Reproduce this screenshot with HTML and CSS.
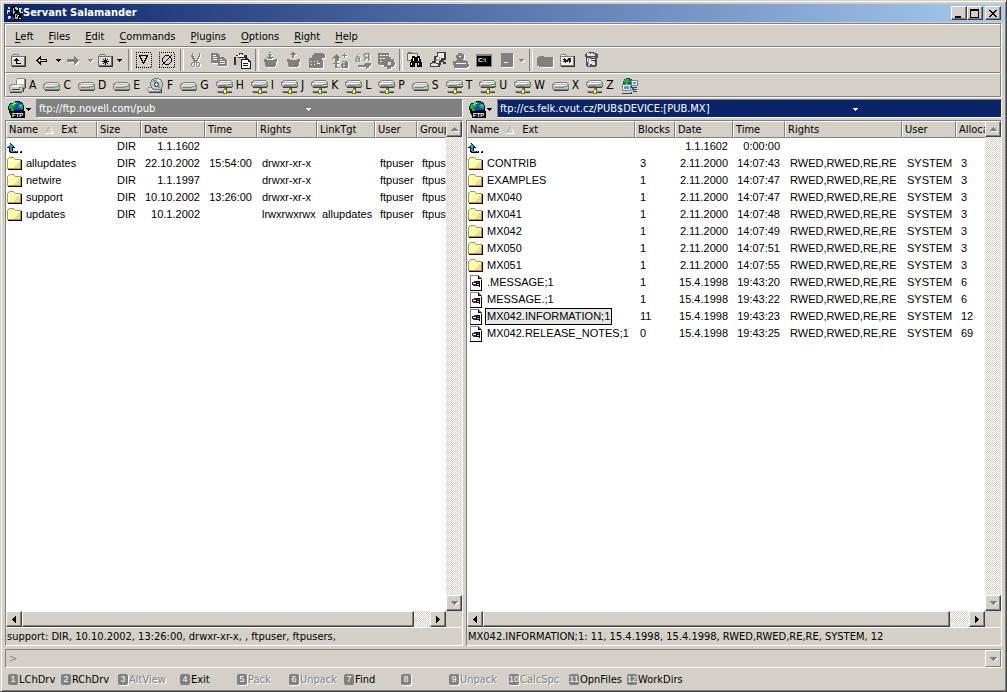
FILE: index.html
```html
<!DOCTYPE html>
<html lang="en">
<head>
<meta charset="utf-8">
<title>Servant Salamander</title>
<link rel="stylesheet" href="styles.css">
</head>
<body>
<svg class="defs" aria-hidden="true">
  <symbol id="caret" viewBox="0 0 5 3"><path fill="currentColor" d="M0 0h5v1h-5zM1 1h3v1h-3zM2 2h1v1h-1z"/></symbol>
  <symbol id="folder" viewBox="0 0 16 16">
    <path fill="#000" d="M14 4h1v10h-14v-1h13z"/>
    <path fill="#a8a030" d="M0 3h1v-1h1v-1h5v1h1v1h6v10h-14z"/>
    <path fill="#ffff9c" d="M1 3h1v-1h5v1h1v1h5v8h-12z"/>
    <path fill="#fff" d="M1 4h12v1h-11v7h-1z"/>
    <path fill="#f8cc90" d="M11 6h1v1h1v5h-6v-1h1v-1h1v-1h1v-1h1z"/>
    <path fill="#ffe8b0" d="M9 7h1v1h-1zM11 8h1v1h-1zM9 10h1v1h-1zM7 9h1v1h-1zM11 10h1v1h-1z"/>
  </symbol>
  <symbol id="up" viewBox="0 -4 16 16">
    <path fill="#000" d="M3 0h1v1h1v1h1v1h1v1h1v1h-2v3h3v2h-6v-1h-1v-4h-2v-1h1v-1h1v-1h1z"/>
    <path fill="#00b0b0" d="M3 1h1v1h1v1h1v1h-1v4h3v1h-4v-1h-1v-4h-2v-1h1v-1h1z"/>
    <path fill="#000" d="M9 8h2v2h-2zM13 8h2v2h-2z"/><path fill="#00b0b0" d="M9 8h1v1h-1zM13 8h1v1h-1z"/>
  </symbol>
  <symbol id="file" viewBox="0 0 16 16">
    <path fill="#000" d="M13 4h1v12h-12v-1h11z"/>
    <path fill="#808080" d="M2 0h9v1h1v1h1v1h1v2h-1v10h-11z"/>
    <path fill="#fff" d="M3 1h7v3h3v11h-10z"/><path fill="#000" d="M10 1h1v2h2v1h-3z"/>
    <path fill="#c00000" d="M6 6h3v1h-3zM4 7h1v1h-1zM5 7h3v1h-3z"/><path fill="#0030d0" d="M5 9h3v2h-3zM4 9h1v1h-1z"/>
    <path fill="#000" d="M8 6h4v6h-1v-1h-3v-3h-3v1h-1v-1h4z"/><path fill="#008000" d="M9 7h2v1h-2z"/><path fill="#ffd000" d="M9 9h2v1h-2z"/>
  </symbol>
  <symbol id="drive" viewBox="0 0 17 16">
    <path fill="#404040" d="M16 6h1v6h-1v1h-14v-1h14z"/>
    <path fill="#808080" d="M3 4h12v1h1v1h1v5h-1v1h-15v-1h-1v-5h1v-1h2z"/>
    <path fill="#e8e8e8" d="M3 5h12v1h-12zM1 7h14v1h-14z"/><path fill="#c0c0c0" d="M2 6h14v1h-14zM1 8h15v3h-15z"/>
    <path fill="#808080" d="M3 9h9v1h-9z"/><path fill="#00d000" d="M12 8h3v1h-3z"/>
  </symbol>
  <symbol id="netdrive" viewBox="0 0 17 16">
    <path fill="#404040" d="M16 4h1v5h-1v1h-14v-1h14z"/>
    <path fill="#808080" d="M3 2h12v1h1v1h1v4h-1v1h-15v-1h-1v-4h1v-1h2z"/>
    <path fill="#f0f0f0" d="M3 3h12v1h-12zM1 5h14v1h-14z"/><path fill="#c0c0c0" d="M2 4h14v1h-14zM1 6h15v2h-15z"/>
    <path fill="#808080" d="M3 7h8v1h-8zM8 10h2v2h-2zM1 13h15v1h-15z"/><path fill="#00d000" d="M12 6h3v1h-3z"/>
    <path fill="#404040" d="M10 10h1v2h-1zM2 14h14v1h-14z"/><path fill="#808000" d="M7 12h4v4h-4z"/><path fill="#ffff60" d="M8 12h2v3h-2z"/>
  </symbol>
  <symbol id="floppy" viewBox="0 0 17 16">
    <path fill="#404040" d="M16 1h1v9h-1v1h-1v3h-2v1h-12v-1h11v-4h4z"/>
    <path fill="#909090" d="M8 0h8v10h-2v4h-13v-1h-1v-6h2v-1h5v-5h1z"/>
    <path fill="#fff" d="M8 1h7v5h-7z"/><path fill="#c8c8c8" d="M8 6h7v3h-3v-1h-4zM1 9h12v4h-12z"/><path fill="#f0f0f0" d="M3 7h8v1h1v1h-11v-1h2z"/>
    <path fill="#404040" d="M3 11h8v1h-8z"/><path fill="#00c000" d="M10 9h2v1h-2z"/>
  </symbol>
  <symbol id="cddrive" viewBox="0 0 17 16">
    <path fill="#404040" d="M14 10h1v5h-13v-1h12z"/><path fill="#909090" d="M1 9h13v5h-13v-1h-1v-3h1z"/><path fill="#d8d8d8" d="M1 10h12v3h-12z"/>
    <path fill="#707888" d="M7 0h5v1h2v1h1v2h1v5h-1v2h-1v1h-8v-1h-1v-1h-1v-2h-1v-4h1v-2h1v-1h2z"/>
    <path fill="#c8c8cc" d="M7 1h5v1h2v2h1v5h-1v2h-7v-1h-2v-2h-1v-4h1v-2h2z"/>
    <path fill="#40b8a0" d="M6 2h3v1h1v2h-2v-1h-2z"/><path fill="#7898e0" d="M10 8h3v2h-2v-1h-1z"/><path fill="#f8f8f8" d="M11 1h1v1h1v1h-1v1h-1z"/>
    <path fill="#606060" d="M8 4h3v1h1v3h-1v1h-3v-1h-1v-3h1z"/><path fill="#fff" d="M9 5h1v1h1v1h-1v1h-1v-1h-1v-1h1z"/><path fill="#00c000" d="M11 13h2v1h-2z"/>
  </symbol>
  <symbol id="network" viewBox="0 0 17 16">
    <path fill="#005080" d="M3 1h2v-1h4v1h2v2h1v4h-1v2h-2v1h-4v-1h-2v-2h-1v-4h1z"/><path fill="#20b820" d="M4 1h4v2h2v1h-3v2h-3v-2h-1v-2h1z"/>
    <path fill="#808080" d="M10 2h7v6h-7zM1 6h9v7h-9z"/><path fill="#e8f4ff" d="M11 3h5v4h-5zM2 7h7v5h-7z"/><path fill="#30a8f0" d="M12 4h3v2h-3zM3 8h5v3h-5z"/>
    <path fill="#404040" d="M10 9h6v1h-6zM1 14h10v2h-10zM12 11h4v1h-4zM13 13h3v1h-3z"/><path fill="#d0d0d0" d="M1 13h9v2h-9z"/><path fill="#008080" d="M11 10h2v4h-1v-2h-1z"/>
  </symbol>
  <symbol id="globe" viewBox="0 0 17 17">
    <path fill="#000060" d="M5 1h2v-1h5v1h2v1h1v2h1v6h-14v-1h-2v-4h1v-2h1v-1h2z"/>
    <path fill="#2040d0" d="M4 2h3v-1h5v1h2v3h1v4h-12v-1h-2v-4h1v-1h2z"/>
    <path fill="#00c020" d="M5 1h4v1h1v1h-2v1h-1v2h-2v2h1v3h-3v-2h-2v-4h1v-2h3zM11 3h3v1h1v4h-2v-1h-2v-1h-1v-2h1z"/>
    <path fill="#80ff60" d="M5 2h3v1h-2v1h-2v-1h1zM12 4h2v1h-2z"/>
    <path fill="#000" d="M1 8h2v2h14v7h-14v-3h-1v-2h-1z"/>
    <text class="tiny" x="4" y="16">FTP</text>
  </symbol>
  <symbol id="salamander" viewBox="0 0 16 16">
    <path fill="#000" d="M5 1h4v1h2v2h2v2h1v3h1v4h-2v2h-3v1h-5v-3h2v-1h-3v-1h-1v-3h2v-4h-1v-2h1z"/>
    <path fill="#c8d8f0" d="M1 2h2v2h-2zM0 5h3v2h-2v2h-1zM1 11h3v2h-1v1h-2zM12 3h3v1h-1v3h-2zM13 7h3v1h-3zM12 13h2v1h-2z"/>
    <path fill="#f0e020" d="M8 2h2v1h1v2h-2v-1h-1zM6 8h1v1h-1zM10 10h2v1h-1v1h-1z"/><path fill="#80c0ff" d="M6 3h1v3h1v2h-2zM8 9h2v1h-1v2h2v2h-3z"/><path fill="#2040a0" d="M5 12h2v3h-2zM11 8h2v1h-2z"/>
  </symbol>
  <symbol id="t-up" viewBox="0 0 16 16">
    <path fill="#303030" d="M14 4h1v11h-14v-1h13z"/><path fill="#707070" d="M0 4h1v-1h1v-1h5v1h1v1h6v10h-14z"/><path fill="#dcdcdc" d="M1 5h12v8h-12zM2 3h5v1h-5z"/><path fill="#fff" d="M1 5h12v1h-12z"/>
    <path fill="#000" d="M5 6h1v1h1v1h1v1h-2v2h4v1h-5v-3h-2v-1h1v-1h1z"/>
  </symbol>
  <symbol id="t-back" viewBox="0 0 16 16"><path fill="#000" d="M6 4h1v3h6v3h-6v3h-1v-1h-1v-1h-1v-1h-1v-1h-1v-1h1v-1h1v-1h1v-1h1z"/><path fill="#e0e0e0" d="M5 7h1v1h6v1h-6v1h-1v-1h-1v-1h1z"/></symbol>
  <symbol id="t-fwd" viewBox="0 0 16 16"><path d="M8 4h1v1h1v1h1v1h1v1h1v1h-1v1h-1v1h-1v1h-1v1h-1v-3h-7v-3h7z"/></symbol>
  <symbol id="t-star" viewBox="0 0 16 16">
    <path fill="#303030" d="M14 4h1v11h-14v-1h13z"/><path fill="#707070" d="M0 4h1v-1h1v-1h5v1h1v1h6v10h-14z"/><path fill="#dcdcdc" d="M1 5h12v8h-12zM2 3h5v1h-5z"/>
    <path fill="#000" d="M7 6h1v7h-1zM4 9h7v1h-7zM5 7h1v1h1v1h1v-1h1v-1h1v1h-1v1h-1v1h1v1h1v1h-1v-1h-1v-1h-1v1h-1v1h-1v-1h1v-1h1v-1h-1v-1h-1z"/>
  </symbol>
  <symbol id="t-filter" viewBox="0 0 16 16"><path fill="none" stroke="#000" stroke-dasharray="1 1" d="M0 .5h16M15.500 2v14M0 15.500h16M.5 2v14"/><path fill="#000" d="M3 3h9v2h-1v2h-1v2h-1v2h-1v1h-1v-1h-1v-2h-1v-2h-1v-2h-1zM5 4v2h1v2h1v2h1v-2h1v-2h1v-2z" fill-rule="evenodd"/></symbol>
  <symbol id="t-nofilter" viewBox="0 0 16 16"><path fill="none" stroke="#000" stroke-dasharray="1 1" d="M0 .5h16M15.500 2v14M0 15.500h16M.5 2v14"/><path fill="#000" d="M6 3h4v1h-4zM5 4h1v1h-1zM4 5h1v1h-1zM3 6h1v4h-1zM4 10h1v1h-1zM5 11h1v1h-1zM6 12h4v1h-4zM10 11h1v1h-1zM11 10h1v1h-1zM12 6h1v4h-1zM11 5h1v1h-1zM10 4h1v1h-1zM12 3h1v1h-1zM11 4h1v1h-1zM10 5h1v1h-1zM9 6h1v1h-1zM8 7h1v1h-1zM7 8h1v1h-1zM6 9h1v1h-1zM5 10h1v1h-1zM4 11h1v1h-1zM3 12h1v1h-1z"/></symbol>
  <symbol id="t-cut" viewBox="0 0 16 16"><path fill-rule="evenodd" d="M4 1h1v3h1v2h1v2h2v-2h1v-2h1v-3h1v4h-1v2h-1v2h-1v1h2v1h1v3h-1v1h-2v-1h-1v-4h-1v4h-1v1h-2v-1h-1v-3h1v-1h2v-1h-1v-2h-1v-2h-1zM4 11v3h2v-3zM9 11v3h2v-3z"/></symbol>
  <symbol id="t-copy" viewBox="0 0 16 16"><path fill-rule="evenodd" d="M0 1h6l3 3v1h3l4 3v6h-9v-3h-7zM2 3v1h3v-1zM2 5v1h4v-1zM2 7v1h4v-1zM9 7v1h2v-1zM9 9v1h5v-1zM9 11v1h5v-1z"/></symbol>
  <symbol id="t-paste" viewBox="0 0 17 16"><path fill="#303030" d="M2 2h3v-2h4v2h4v3h1v3h-3v5h-9v-1h-2v-8h2z"/><path fill="#c8c8c8" d="M2 3h2v2h7v3h-3v5h-6z"/><path fill="#fff" d="M6 1h2v1h2v2h-6v-2h2zM8 7h6l2 2v6h-8z"/><path fill="#202020" d="M7 6h7v1h-6v8h9v1h-10zM14 6h1v1h1v1h1v8h-1v-7h-2zM9 10h5v1h-5zM9 12h5v1h-5z"/></symbol>
  <symbol id="t-pack" viewBox="0 0 16 16"><path d="M6 0h2v1h-2zM5 2h4v1h-4zM6 3h2v2h3v1h-2v1h-4v-1h-2v-1h3zM1 7h3v1h7v-1h3v3h-1v4h-1v1h-9v-1h-1v-4h-1z"/></symbol>
  <symbol id="t-unpack" viewBox="0 0 16 16"><path d="M6 0h2v1h1v1h1v1h-2v3h-2v-3h-2v-1h1v-1h1zM1 7h3v1h7v-1h3v3h-1v4h-1v1h-9v-1h-1v-4h-1z"/></symbol>
  <symbol id="t-props" viewBox="0 0 17 16"><path fill-rule="evenodd" d="M5 0h9v1h2v4h-3v2h1v8h-14v-10h3v-3h2zM2 8v1h1v-1zM5 8v1h1v-1zM8 8v1h1v-1zM2 11v1h1v-1zM5 11v1h1v-1zM8 10v1h3v-1z"/></symbol>
  <symbol id="t-attr" viewBox="0 0 17 16"><path fill-rule="evenodd" d="M4 1h1v1h1v1h1v1h1v1h-1v3h-4v-3h-1v1h-2v-1h1v-1h1v-1h1v-1h1zM12 0h1v2h2v1h-2v2h-1v-2h-2v-1h2zM3 8h2v2h2v1h-2v3h2v1h-4v-4h-2v-1h2zM10 8h5v1h1v6h-6v-1h-1v-3h1v-1h3v-1h-3zM11 12v1h2v-1z"/></symbol>
  <symbol id="t-case" viewBox="0 0 17 16"><text class="glyph" x="0" y="9">á</text><text class="glyph" x="8" y="8">Я</text><path d="M3 12h6v-1h1v-1h6v3h-2v2h-2v1h-1v-2h-8z"/></symbol>
  <symbol id="t-list" viewBox="0 0 17 16"><path fill-rule="evenodd" d="M0 0h11v4h2v2h3v3h1v3h-1v2h-3v2h-4v-2h-3v-2h-5v-1h-1zM2 2v1h2v-1zM5 2v1h2v-1zM8 2v1h2v-1zM2 5v1h2v-1zM5 5v1h2v-1zM2 8v1h2v-1zM10 9v3h3v-3z"/></symbol>
  <symbol id="t-find" viewBox="0 0 16 16"><path fill="#707070" d="M0 1h1v-1h4v1h6v8h-11z"/><path fill="#e8e8e8" d="M1 2h9v6h-9z"/><path fill="#000" d="M5 4h3v1h2v-1h3v3h1v3h1v5h-5v-4h-2v4h-5v-5h1v-3h1z"/><path fill="#fff" d="M6 6h1v3h-1zM11 6h1v3h-1zM4 11h1v2h-1zM11 11h1v2h-1z"/></symbol>
  <symbol id="t-user" viewBox="0 0 16 16"><path fill="#404040" d="M7 0h9v8h-2v2h2v2h-3v-2h-2v3h-1v2h-10v-4h2v-2h2v-5h3z"/><path fill="#e8e8e8" d="M8 1h6v5h-3v2h-2v3h-3v-6h2zM1 12h7v2h-7z"/><path fill="#b0b0b0" d="M6 5h4v4h-4zM2 11h4v1h-4z"/><path fill="#fff" d="M7 5h2v2h-2z"/></symbol>
  <symbol id="t-usergray" viewBox="0 0 17 16"><path fill-rule="evenodd" d="M5 0h4v1h2v5h-1v1h2v1h3v3h1v3h-2v1h-13v-3h-1v-4h3v-1h1v-2h-1v-3h2zM6 3v1h2v-1zM3 10v1h10v-1z"/></symbol>
  <symbol id="t-cmd" viewBox="0 0 17 16"><path fill="#808080" d="M0 1h16v13h-16z"/><path fill="#000" d="M1 3h14v10h-14z"/><text class="tiny" x="2" y="9">C:\</text></symbol>
  <symbol id="t-drive" viewBox="0 0 16 16"><path fill-rule="evenodd" d="M2 1h12v14h-12zM5 10v1h4v-1z"/></symbol>
  <symbol id="t-folder" viewBox="0 0 17 16"><path d="M0 5h1v-1h1v-1h5v1h9v10h-14v-1h-2z"/></symbol>
  <symbol id="t-fonts" viewBox="0 0 16 16"><path fill="#303030" d="M14 4h1v11h-14v-1h13z"/><path fill="#808080" d="M0 3h1v-1h5v1h1v1h7v10h-14z"/><path fill="#f4f4f4" d="M1 5h12v8h-12zM1 3h5v1h-5z"/><path fill="#202020" d="M4 6h1v1h1v1h1v-1h1v-1h3v4h-1v1h-1v-2h-1v1h-2v1h-1v-1h-2v-1h1v-1h-1v-1h1zM9 10h1v1h-1z"/></symbol>
  <symbol id="t-bin" viewBox="0 0 16 16"><path fill="#505050" d="M3 1h2v-1h6v1h3v1h1v4h-1v8h-1v1h-9v-1h-1v-9h-1v-3h1z"/><path fill="#e0e0e0" d="M4 1h3v1h5v2h-8zM4 6h3v8h-2z"/><path fill="#a0a0a0" d="M5 6h1v7h-1zM8 5h4v1h-4z"/><path fill="#e8e8e8" d="M7 7h5v1h-4v1h3v1h1v3h-3v-1h-2zM8 1h2v1h-2z"/></symbol>
</svg>

<div class="window">
  <header class="titlebar">
    <svg class="i16 crisp"><use href="#salamander"/></svg>
    <h1>Servant Salamander</h1>
    <div class="winbtns">
      <button class="winbtn" aria-label="Minimize"><svg class="crisp" width="10" height="8"><path d="M1 6h6v2h-6z"/></svg></button>
      <button class="winbtn" aria-label="Maximize"><svg class="crisp" width="10" height="9"><path fill-rule="evenodd" d="M0 0h9v9h-9zM1 2v6h7v-6z"/></svg></button>
      <button class="winbtn close" aria-label="Close"><svg class="crisp" width="10" height="8"><path d="M1 0h2v1h1v1h2v-1h1v-1h2v1h-1v1h-1v1h-1v1h1v1h1v1h1v1h-2v-1h-1v-1h-2v1h-1v1h-2v-1h1v-1h1v-1h1v-1h-1v-1h-1v-1h-1z"/></svg></button>
    </div>
  </header>

  <div class="rebar">
    <nav class="band menu">
      <button><u>L</u>eft</button><button><u>F</u>iles</button><button><u>E</u>dit</button><button><u>C</u>ommands</button><button><u>P</u>lugins</button><button><u>O</u>ptions</button><button><u>R</u>ight</button><button><u>H</u>elp</button>
    </nav>
    <div class="band tools">
      <button class="tool" aria-label="Parent directory"><svg class="i16 crisp"><use href="#t-up"/></svg></button>
      <button class="tool" aria-label="Back"><svg class="i16 crisp"><use href="#t-back"/></svg></button><button class="drop" aria-label="Back list"><svg class="caret"><use href="#caret"/></svg></button>
      <button class="tool" disabled aria-label="Forward"><svg class="i16 crisp"><use href="#t-fwd"/></svg></button><button class="drop" disabled aria-label="Forward list"><svg class="caret"><use href="#caret"/></svg></button>
      <button class="tool hot" aria-label="Hot paths"><svg class="i16 crisp"><use href="#t-star"/></svg><svg class="caret"><use href="#caret"/></svg></button>
      <span class="sep"></span>
      <button class="tool" aria-label="Filter"><svg class="i16 crisp"><use href="#t-filter"/></svg></button>
      <button class="tool" aria-label="No filter"><svg class="i16 crisp"><use href="#t-nofilter"/></svg></button>
      <span class="sep"></span>
      <button class="tool" disabled aria-label="Cut"><svg class="i16 crisp"><use href="#t-cut"/></svg></button>
      <button class="tool" disabled aria-label="Copy"><svg class="i16 crisp"><use href="#t-copy"/></svg></button>
      <button class="tool" aria-label="Paste"><svg class="i17 crisp"><use href="#t-paste"/></svg></button>
      <span class="sep"></span>
      <button class="tool" disabled aria-label="Pack"><svg class="i16 crisp"><use href="#t-pack"/></svg></button>
      <button class="tool" disabled aria-label="Unpack"><svg class="i16 crisp"><use href="#t-unpack"/></svg></button>
      <button class="tool" disabled aria-label="Properties"><svg class="i17 crisp"><use href="#t-props"/></svg></button>
      <button class="tool" disabled aria-label="Attributes"><svg class="i17 crisp"><use href="#t-attr"/></svg></button>
      <button class="tool" disabled aria-label="Change case"><svg class="i17 crisp"><use href="#t-case"/></svg></button>
      <button class="tool" disabled aria-label="Convert"><svg class="i17 crisp"><use href="#t-list"/></svg></button>
      <span class="sep"></span>
      <button class="tool" aria-label="Find"><svg class="i16 crisp"><use href="#t-find"/></svg></button>
      <button class="tool" aria-label="User menu"><svg class="i16 crisp"><use href="#t-user"/></svg></button>
      <button class="tool" disabled aria-label="Disconnect"><svg class="i17 crisp"><use href="#t-usergray"/></svg></button>
      <button class="tool" aria-label="Command shell"><svg class="i17 crisp"><use href="#t-cmd"/></svg></button>
      <button class="tool" disabled aria-label="Drive"><svg class="i16 crisp"><use href="#t-drive"/></svg></button><button class="drop near" disabled aria-label="Drive list"><svg class="caret"><use href="#caret"/></svg></button>
      <span class="sep"></span>
      <button class="tool" disabled aria-label="Folder"><svg class="i17 crisp"><use href="#t-folder"/></svg></button>
      <button class="tool" aria-label="Fonts"><svg class="i16 crisp"><use href="#t-fonts"/></svg></button>
      <button class="tool" aria-label="Recycle bin"><svg class="i16 crisp"><use href="#t-bin"/></svg></button>
    </div>
    <div class="band drives">
      <button><svg class="i17 crisp"><use href="#floppy"/></svg>A</button>
      <button><svg class="i17 crisp"><use href="#drive"/></svg>C</button>
      <button><svg class="i17 crisp"><use href="#drive"/></svg>D</button>
      <button><svg class="i17 crisp"><use href="#drive"/></svg>E</button>
      <button><svg class="i17 crisp"><use href="#cddrive"/></svg>F</button>
      <button><svg class="i17 crisp"><use href="#drive"/></svg>G</button>
      <button><svg class="i17 crisp"><use href="#netdrive"/></svg>H</button>
      <button><svg class="i17 crisp"><use href="#netdrive"/></svg>I</button>
      <button><svg class="i17 crisp"><use href="#netdrive"/></svg>J</button>
      <button><svg class="i17 crisp"><use href="#netdrive"/></svg>K</button>
      <button><svg class="i17 crisp"><use href="#netdrive"/></svg>L</button>
      <button><svg class="i17 crisp"><use href="#netdrive"/></svg>P</button>
      <button><svg class="i17 crisp"><use href="#drive"/></svg>S</button>
      <button><svg class="i17 crisp"><use href="#netdrive"/></svg>T</button>
      <button><svg class="i17 crisp"><use href="#netdrive"/></svg>U</button>
      <button><svg class="i17 crisp"><use href="#netdrive"/></svg>W</button>
      <button><svg class="i17 crisp"><use href="#drive"/></svg>X</button>
      <button><svg class="i17 crisp"><use href="#netdrive"/></svg>Z</button>
      <button aria-label="Network"><svg class="i17 crisp"><use href="#network"/></svg></button>
    </div>
  </div>

  <main class="panels">
    <section class="panel">
      <div class="pathrow">
        <button class="source" aria-label="FTP"><svg class="i17 crisp"><use href="#globe"/></svg><svg class="caret"><use href="#caret"/></svg></button>
        <button class="path"><span>ftp://ftp.novell.com/pub</span><span class="pathdrop"><svg class="caret"><use href="#caret"/></svg></span></button>
      </div>
      <div class="listbox">
        <div class="view">
          <table class="files left">
            <colgroup><col class="w91"><col class="w44"><col class="w64"><col class="w52"><col class="w60"><col class="w58"><col class="w42"><col class="w60"></colgroup>
            <thead><tr><th><span class="namehead">Name<svg class="sort" viewBox="0 0 9 8"><path fill="#fff" d="M5 0l4 8h-9v-1h7z"/><path fill="none" stroke="#a8a49c" d="M.5 7L4.500 .5"/></svg>Ext</span></th><th>Size</th><th>Date</th><th>Time</th><th>Rights</th><th>LinkTgt</th><th>User</th><th>Group</th></tr></thead>
            <tbody>
              <tr><td><span class="name"><svg class="i16 crisp"><use href="#up"/></svg></span></td><td>DIR</td><td>1.1.1602</td><td></td><td></td><td></td><td></td><td></td></tr>
              <tr><td><span class="name"><svg class="i16 crisp"><use href="#folder"/></svg><span>allupdates</span></span></td><td>DIR</td><td>22.10.2002</td><td>15:54:00</td><td>drwxr-xr-x</td><td></td><td>ftpuser</td><td>ftpusers</td></tr>
              <tr><td><span class="name"><svg class="i16 crisp"><use href="#folder"/></svg><span>netwire</span></span></td><td>DIR</td><td>1.1.1997</td><td></td><td>drwxr-xr-x</td><td></td><td>ftpuser</td><td>ftpusers</td></tr>
              <tr><td><span class="name"><svg class="i16 crisp"><use href="#folder"/></svg><span>support</span></span></td><td>DIR</td><td>10.10.2002</td><td>13:26:00</td><td>drwxr-xr-x</td><td></td><td>ftpuser</td><td>ftpusers</td></tr>
              <tr><td><span class="name"><svg class="i16 crisp"><use href="#folder"/></svg><span>updates</span></span></td><td>DIR</td><td>10.1.2002</td><td></td><td>lrwxrwxrwx</td><td>allupdates</td><td>ftpuser</td><td>ftpusers</td></tr>
            </tbody>
          </table>
        </div>
        <div class="vscroll"><button class="sbtn" disabled aria-label="Scroll up"><svg class="arrow crisp" viewBox="0 0 7 4"><path d="M3 0h1v1h1v1h1v1h1v1h-7v-1h1v-1h1v-1h1z"/></svg></button><button class="sbtn" disabled aria-label="Scroll down"><svg class="arrow crisp" viewBox="0 0 7 4"><path d="M0 0h7v1h-1v1h-1v1h-1v1h-1v-1h-1v-1h-1v-1h-1z"/></svg></button></div>
        <div class="hscroll"><button class="sbtn" aria-label="Scroll left"><svg class="harrow crisp" viewBox="0 0 4 7"><path d="M4 0v7h-1v-1h-1v-1h-1v-1h-1v-1h1v-1h1v-1h1v-1z"/></svg></button><div class="track"><div class="thumb" style="width:96%"></div></div><button class="sbtn" aria-label="Scroll right"><svg class="harrow crisp" viewBox="0 0 4 7"><path d="M0 0h1v1h1v1h1v1h1v1h-1v1h-1v1h-1v1h-1z"/></svg></button></div>
        <div class="corner"></div>
        <div class="status">support: DIR, 10.10.2002, 13:26:00, drwxr-xr-x, , ftpuser, ftpusers,</div>
      </div>
    </section>

    <section class="panel active">
      <div class="pathrow">
        <button class="source" aria-label="FTP"><svg class="i17 crisp"><use href="#globe"/></svg><svg class="caret"><use href="#caret"/></svg></button>
        <button class="path"><span>ftp://cs.felk.cvut.cz/PUB$DEVICE:[PUB.MX]</span><span class="pathdrop"><svg class="caret"><use href="#caret"/></svg></span></button>
      </div>
      <div class="listbox">
        <div class="view">
          <table class="files right">
            <colgroup><col class="w168"><col class="w40"><col class="w58"><col class="w52"><col class="w117"><col class="w54"><col class="w60"></colgroup>
            <thead><tr><th><span class="namehead">Name<svg class="sort" viewBox="0 0 9 8"><path fill="#fff" d="M5 0l4 8h-9v-1h7z"/><path fill="none" stroke="#a8a49c" d="M.5 7L4.500 .5"/></svg>Ext</span></th><th>Blocks</th><th>Date</th><th>Time</th><th>Rights</th><th>User</th><th>Allocated</th></tr></thead>
            <tbody>
              <tr><td><span class="name"><svg class="i16 crisp"><use href="#up"/></svg></span></td><td></td><td>1.1.1602</td><td>0:00:00</td><td></td><td></td><td></td></tr>
              <tr><td><span class="name"><svg class="i16 crisp"><use href="#folder"/></svg><span>CONTRIB</span></span></td><td>3</td><td>2.11.2000</td><td>14:07:43</td><td>RWED,RWED,RE,RE</td><td>SYSTEM</td><td>3</td></tr>
              <tr><td><span class="name"><svg class="i16 crisp"><use href="#folder"/></svg><span>EXAMPLES</span></span></td><td>1</td><td>2.11.2000</td><td>14:07:47</td><td>RWED,RWED,RE,RE</td><td>SYSTEM</td><td>3</td></tr>
              <tr><td><span class="name"><svg class="i16 crisp"><use href="#folder"/></svg><span>MX040</span></span></td><td>1</td><td>2.11.2000</td><td>14:07:47</td><td>RWED,RWED,RE,RE</td><td>SYSTEM</td><td>3</td></tr>
              <tr><td><span class="name"><svg class="i16 crisp"><use href="#folder"/></svg><span>MX041</span></span></td><td>1</td><td>2.11.2000</td><td>14:07:48</td><td>RWED,RWED,RE,RE</td><td>SYSTEM</td><td>3</td></tr>
              <tr><td><span class="name"><svg class="i16 crisp"><use href="#folder"/></svg><span>MX042</span></span></td><td>1</td><td>2.11.2000</td><td>14:07:49</td><td>RWED,RWED,RE,RE</td><td>SYSTEM</td><td>3</td></tr>
              <tr><td><span class="name"><svg class="i16 crisp"><use href="#folder"/></svg><span>MX050</span></span></td><td>1</td><td>2.11.2000</td><td>14:07:51</td><td>RWED,RWED,RE,RE</td><td>SYSTEM</td><td>3</td></tr>
              <tr><td><span class="name"><svg class="i16 crisp"><use href="#folder"/></svg><span>MX051</span></span></td><td>1</td><td>2.11.2000</td><td>14:07:55</td><td>RWED,RWED,RE,RE</td><td>SYSTEM</td><td>3</td></tr>
              <tr><td><span class="name"><svg class="i16 crisp"><use href="#file"/></svg><span>.MESSAGE;1</span></span></td><td>1</td><td>15.4.1998</td><td>19:43:20</td><td>RWED,RWED,RE,RE</td><td>SYSTEM</td><td>6</td></tr>
              <tr><td><span class="name"><svg class="i16 crisp"><use href="#file"/></svg><span>MESSAGE.;1</span></span></td><td>1</td><td>15.4.1998</td><td>19:43:22</td><td>RWED,RWED,RE,RE</td><td>SYSTEM</td><td>6</td></tr>
              <tr><td><span class="name"><svg class="i16 crisp"><use href="#file"/></svg><span class="focus">MX042.INFORMATION;1</span></span></td><td>11</td><td>15.4.1998</td><td>19:43:23</td><td>RWED,RWED,RE,RE</td><td>SYSTEM</td><td>12</td></tr>
              <tr><td><span class="name"><svg class="i16 crisp"><use href="#file"/></svg><span>MX042.RELEASE_NOTES;1</span></span></td><td>0</td><td>15.4.1998</td><td>19:43:25</td><td>RWED,RWED,RE,RE</td><td>SYSTEM</td><td>69</td></tr>
            </tbody>
          </table>
        </div>
        <div class="vscroll"><button class="sbtn" disabled aria-label="Scroll up"><svg class="arrow crisp" viewBox="0 0 7 4"><path d="M3 0h1v1h1v1h1v1h1v1h-7v-1h1v-1h1v-1h1z"/></svg></button><button class="sbtn" disabled aria-label="Scroll down"><svg class="arrow crisp" viewBox="0 0 7 4"><path d="M0 0h7v1h-1v1h-1v1h-1v1h-1v-1h-1v-1h-1v-1h-1z"/></svg></button></div>
        <div class="hscroll"><button class="sbtn" aria-label="Scroll left"><svg class="harrow crisp" viewBox="0 0 4 7"><path d="M4 0v7h-1v-1h-1v-1h-1v-1h-1v-1h1v-1h1v-1h1v-1z"/></svg></button><div class="track"><div class="thumb" style="width:96%"></div></div><button class="sbtn" aria-label="Scroll right"><svg class="harrow crisp" viewBox="0 0 4 7"><path d="M0 0h1v1h1v1h1v1h1v1h-1v1h-1v1h-1v1h-1z"/></svg></button></div>
        <div class="corner"></div>
        <div class="status">MX042.INFORMATION;1: 11, 15.4.1998, 15.4.1998, RWED,RWED,RE,RE, SYSTEM, 12</div>
      </div>
    </section>
  </main>

  <div class="cmdline">
    <label for="cmd">&gt;</label><input id="cmd" type="text" disabled>
    <button class="combo" disabled aria-label="Command history"><svg class="arrow crisp" viewBox="0 0 7 4"><path d="M0 0h7v1h-1v1h-1v1h-1v1h-1v-1h-1v-1h-1v-1h-1z"/></svg></button>
  </div>

  <footer class="fkeys">
    <button><kbd>1</kbd>LChDrv</button><button><kbd>2</kbd>RChDrv</button><button disabled><kbd>3</kbd>AltView</button><button><kbd>4</kbd>Exit</button><button disabled><kbd>5</kbd>Pack</button><button disabled><kbd>6</kbd>Unpack</button><button><kbd>7</kbd>Find</button><button disabled><kbd>8</kbd></button><button disabled><kbd>9</kbd>Unpack</button><button disabled><kbd>10</kbd>CalcSpc</button><button><kbd>11</kbd>OpnFiles</button><button><kbd>12</kbd>WorkDirs</button>
  </footer>
</div>
</body>
</html>
```

FILE: styles.css
```css
:root {
  --face: #d4d0c8;
  --shadow: #808080;
  --dark: #404040;
}
* { box-sizing: border-box; }
html, body { height: 100%; margin: 0; }
body {
  background: var(--face);
  color: #000;
  font: 11px/16px "DejaVu Sans Condensed", "DejaVu Sans", sans-serif;
}
button, input {
  font: inherit;
  color: inherit;
  background: none;
  border: 0;
  border-radius: 0;
  padding: 0;
  margin: 0;
}
svg { display: block; flex: none; }
.defs { display: none; }
.crisp { shape-rendering: crispEdges; }
.i16 { width: 16px; height: 16px; }
.i17 { width: 17px; height: 17px; }
.caret { width: 5px; height: 3px; shape-rendering: crispEdges; }
.tiny { font: bold 6px "Liberation Sans", Arial, sans-serif; fill: #fff; }
.glyph { font: bold 10px "Liberation Sans", Arial, sans-serif; }

.window {
  min-height: 100vh;
  display: flex;
  flex-direction: column;
  padding: 3px 2px 0 3px;
  border-top: 1px solid var(--face);
  border-left: 1px solid var(--face);
  border-right: 1px solid var(--dark);
  border-bottom: 1px solid var(--dark);
  box-shadow: inset 1px 1px #fff, inset -1px -1px var(--shadow);
}

.titlebar {
  display: flex;
  align-items: center;
  height: 18px;
  margin-bottom: 1px;
  padding: 0 3px;
  background: linear-gradient(90deg, #0a246a, #a6caf0);
}
.titlebar h1 {
  flex: 1;
  margin: 0;
  font-size: 11px;
  line-height: 18px;
  color: #fff;
}
.winbtns { display: flex; }
.winbtn, .sbtn, .thumb, .combo {
  background: var(--face);
  border: 1px solid;
  border-color: #fff var(--dark) var(--dark) #fff;
  box-shadow: inset -1px -1px var(--shadow);
}
.winbtn {
  width: 16px;
  height: 14px;
  padding: 1px 0 0 2px;
}
.winbtn.close { margin-left: 2px; }

.rebar {
  margin-right: 2px;
  border: 1px solid;
  border-color: var(--shadow) #fff #fff var(--shadow);
}
.band {
  display: flex;
  align-items: center;
  border: 1px solid;
  border-color: #fff var(--shadow) var(--shadow) #fff;
}
.menu { height: 23px; padding: 2px 1px 0; }
.menu button { padding: 0 7px 0 8px; line-height: 19px; }
.menu u { text-underline-offset: 2px; }

.tools { height: 26px; padding-left: 2px; }
.tool { width: 23px; height: 22px; padding: 1px 3px; }
.hot { display: flex; align-items: center; gap: 3px; width: 32px; }
.drop { width: 9px; height: 22px; padding-left: 2px; }
.near { padding-left: 0; }
.tool:disabled, .drop:disabled {
  fill: var(--shadow);
  color: var(--shadow);
}
.tool:disabled svg, .drop:disabled svg { filter: drop-shadow(1px 1px 0 #fff); }
.sep {
  width: 6px;
  height: 22px;
  display: flex;
  justify-content: center;
}
.sep::before {
  content: "";
  width: 2px;
  border-left: 1px solid var(--shadow);
  border-right: 1px solid #fff;
}
.drives { height: 24px; }
.drives button {
  display: flex;
  align-items: center;
  gap: 3px;
  padding: 0 4px 0 3px;
  font-size: 12px;
  line-height: 20px;
}

.panels {
  flex: 1;
  display: grid;
  grid-template-columns: 458fr 536fr;
  gap: 3px;
  padding: 1px 2px 3px 1px;
}
.panel {
  display: flex;
  flex-direction: column;
  gap: 2px;
  min-width: 0;
}
.pathrow { display: flex; height: 19px; }
.source {
  display: flex;
  align-items: center;
  gap: 1px;
  width: 31px;
  padding: 1px 0 0 3px;
}
.path {
  flex: 1;
  display: flex;
  align-items: center;
  min-width: 0;
  padding: 1px 0 0 2px;
  line-height: 16px;
  color: #fff;
  background: var(--shadow);
  border: 1px solid;
  border-color: var(--shadow) #fff #fff var(--shadow);
}
.active .path { background: #0a246a; }
.pathdrop { flex: 1; display: flex; justify-content: center; }

.listbox {
  flex: 1;
  display: grid;
  grid-template-columns: minmax(0, 1fr) 16px;
  grid-template-rows: 1fr 16px 18px;
  border: 1px solid;
  border-color: var(--shadow) #fff #fff var(--shadow);
}
.view { overflow: hidden; background: #fff; }
.files {
  table-layout: fixed;
  border-spacing: 0;
  font-size: 11px;
}
.files.left { width: 471px; }
.files.right { width: 549px; }
.w40 { width: 40px; }
.w42 { width: 42px; }
.w44 { width: 44px; }
.w52 { width: 52px; }
.w54 { width: 54px; }
.w58 { width: 58px; }
.w60 { width: 60px; }
.w64 { width: 64px; }
.w91 { width: 91px; }
.w117 { width: 117px; }
.w168 { width: 168px; }
.files th {
  height: 17px;
  padding: 1px 0 0 2px;
  font-weight: normal;
  line-height: 14px;
  text-align: left;
  white-space: nowrap;
  background: var(--face);
  border: 1px solid;
  border-color: #fff var(--shadow) var(--shadow) #fff;
}
.namehead { display: flex; align-items: center; gap: 7px; }
.sort { width: 9px; height: 8px; }
.files td {
  height: 17px;
  padding: 0 0 0 5px;
  font-family: "Liberation Sans", Arial, sans-serif;
  line-height: 17px;
  white-space: nowrap;
}
.files td:first-child { padding-left: 1px; }
.files td:nth-child(3), .files td:nth-child(4), .left td:nth-child(2) {
  padding: 0 5px 0 0;
  text-align: right;
}
.name { display: flex; align-items: center; gap: 1px; height: 17px; }
.name > span { padding: 0 1px; border: 1px solid transparent; line-height: 15px; }
.name > .focus { background: #e8e8e8; border-color: #000; }

.vscroll, .track {
  background: repeating-conic-gradient(#fff 0 25%, var(--face) 0 50%) 0 0 / 2px 2px;
}
.vscroll { display: flex; flex-direction: column; justify-content: space-between; }
.hscroll { display: flex; }
.track { flex: 1; }
.thumb { height: 16px; }
.sbtn {
  display: flex;
  align-items: center;
  justify-content: center;
  width: 16px;
  height: 16px;
}
.arrow { width: 7px; height: 4px; }
.harrow { width: 4px; height: 7px; }
.sbtn:disabled, .combo:disabled { fill: var(--shadow); }
.sbtn:disabled svg, .combo:disabled svg { filter: drop-shadow(1px 1px 0 #fff); }
.status {
  grid-column: 1 / -1;
  overflow: hidden;
  padding: 1px 0 0 1px;
  line-height: 16px;
  white-space: nowrap;
  border-top: 1px solid #fff;
}

.cmdline {
  display: flex;
  height: 19px;
  margin: 0 2px 0 1px;
  color: var(--shadow);
  line-height: 17px;
  border: 1px solid;
  border-color: var(--shadow) #fff #fff var(--shadow);
}
.cmdline label { padding-left: 3px; }
.cmdline input { flex: 1; min-width: 0; }
.combo {
  display: flex;
  align-items: center;
  justify-content: center;
  width: 16px;
  border-color: #fff var(--shadow) var(--shadow) #fff;
  box-shadow: none;
}

.fkeys {
  display: grid;
  grid-template-columns: 53px 57px 62px 57px 52px 55px 57px 48px 60px 60px 58px auto;
  justify-content: start;
  height: 23px;
  padding-left: 4px;
}
.fkeys button {
  display: flex;
  align-items: center;
  gap: 1px;
  white-space: nowrap;
}
.fkeys button:disabled { color: var(--shadow); text-shadow: 1px 1px #fff; }
.fkeys kbd {
  min-width: 10px;
  height: 11px;
  font: 9px/11px "Liberation Sans", Arial, sans-serif;
  text-align: center;
  text-shadow: none;
  color: #fff;
  background: var(--shadow);
  border-radius: 2px;
}
.fkeys button:disabled kbd { box-shadow: 1px 1px #fff; }
```
